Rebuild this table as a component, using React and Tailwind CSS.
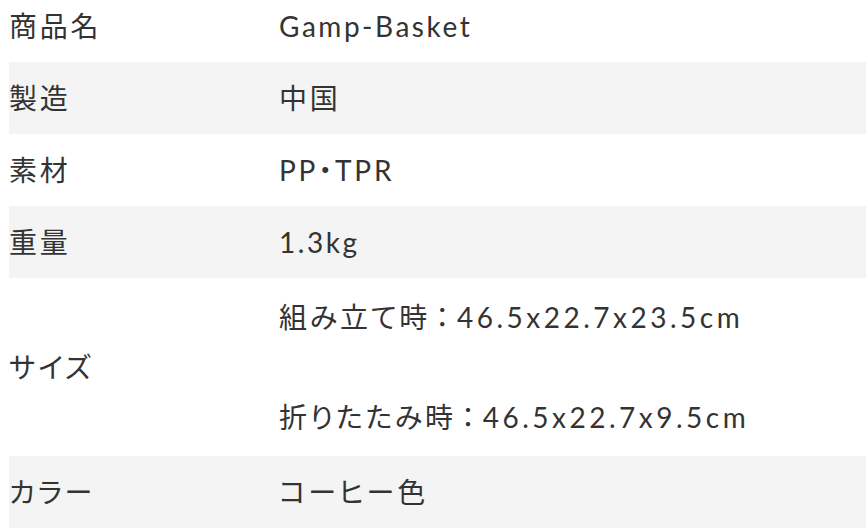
const ROWS = [
  { label: "商品名", values: [["Gamp-Basket"]], latin: true },
  { label: "製造", values: [["中国"]] },
  { label: "素材", values: [["PP・TPR"]] },
  { label: "重量", values: [["1.3kg"]], latin: true },
  {
    label: "サイズ",
    values: [
      ["組み立て時", "46.5x22.7x23.5cm"],
      ["折りたたみ時", "46.5x22.7x9.5cm"],
    ],
  },
  { label: "カラー", values: [["コーヒー色"]] },
];

export default function App() {
  return (
    <div className="w-[866px] h-[528px] overflow-hidden bg-white">
      <div className="-mt-[10px] pl-[9px] font-['Lato','Noto_Sans_CJK_JP',sans-serif] text-[28px] tracking-[0.1em] text-[#333333] [font-feature-settings:'palt']">
        {ROWS.map((r, i) => (
          <div
            key={r.label}
            className={`flex items-center ${r.values.length > 1 ? "h-[178px]" : "h-[72px]"} ${i % 2 === 1 ? "bg-[#f4f4f4]" : "bg-white"}`}
          >
            <div className="w-[270px] shrink-0">{r.label}</div>
            <div className="flex flex-col gap-[50px]">
              {r.values.map(([a, b]) => (
                <div key={a} className={`leading-[50px] ${r.latin ? "tracking-[0.09em]" : ""}`}>
                  {a}
                  {b && (
                    <>
                      <span className="ml-[5px] mr-[5px]">：</span>
                      <span className="tracking-[3.5px]">{b}</span>
                    </>
                  )}
                </div>
              ))}
            </div>
          </div>
        ))}
      </div>
    </div>
  );
}
